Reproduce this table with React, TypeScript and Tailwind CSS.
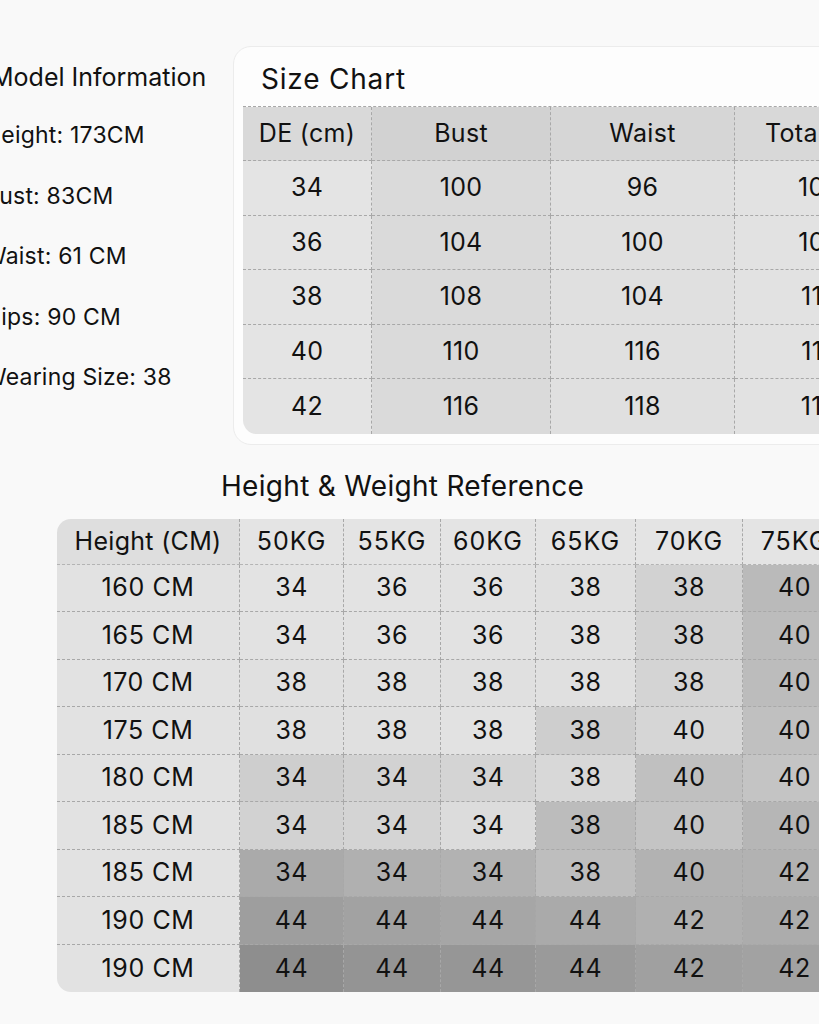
const modelInfo = ["Height: 173CM", "Bust: 83CM", "Waist: 61 CM", "Hips: 90 CM", "Wearing Size: 38"];

const sizeHead = ["DE (cm)", "Bust", "Waist", "Total Length"];
const sizeHeadBg = ["bg-[#d9d9d9]", "bg-[#d2d2d2]", "bg-[#d6d6d6]", "bg-[#d8d8d8]"];
const sizeBodyBg = ["bg-[#e4e4e4]", "bg-[#dadada]", "bg-[#e0e0e0]", "bg-[#e2e2e2]"];
const sizeRows = [
  ["34", "100", "96", "104"],
  ["36", "104", "100", "106"],
  ["38", "108", "104", "110"],
  ["40", "110", "116", "112"],
  ["42", "116", "118", "114"],
];

const weights = ["50KG", "55KG", "60KG", "65KG", "70KG", "75KG"];

const refRows: { h: string; v: string[]; bg: string[] }[] = [
  { h: "160 CM", v: ["34", "36", "36", "38", "38", "40"], bg: ["bg-[#e3e3e3]", "bg-[#e3e3e3]", "bg-[#e2e2e2]", "bg-[#e0e0e0]", "bg-[#d2d2d2]", "bg-[#bababa]"] },
  { h: "165 CM", v: ["34", "36", "36", "38", "38", "40"], bg: ["bg-[#e2e2e2]", "bg-[#e2e2e2]", "bg-[#e2e2e2]", "bg-[#e0e0e0]", "bg-[#d2d2d2]", "bg-[#bcbcbc]"] },
  { h: "170 CM", v: ["38", "38", "38", "38", "38", "40"], bg: ["bg-[#e0e0e0]", "bg-[#e0e0e0]", "bg-[#e0e0e0]", "bg-[#e0e0e0]", "bg-[#d4d4d4]", "bg-[#bcbcbc]"] },
  { h: "175 CM", v: ["38", "38", "38", "38", "40", "40"], bg: ["bg-[#e0e0e0]", "bg-[#e0e0e0]", "bg-[#e2e2e2]", "bg-[#cecece]", "bg-[#d6d6d6]", "bg-[#c0c0c0]"] },
  { h: "180 CM", v: ["34", "34", "34", "38", "40", "40"], bg: ["bg-[#cecece]", "bg-[#d2d2d2]", "bg-[#d4d4d4]", "bg-[#d8d8d8]", "bg-[#c0c0c0]", "bg-[#c4c4c4]"] },
  { h: "185 CM", v: ["34", "34", "34", "38", "40", "40"], bg: ["bg-[#d2d2d2]", "bg-[#d4d4d4]", "bg-[#dcdcdc]", "bg-[#bcbcbc]", "bg-[#c4c4c4]", "bg-[#b6b6b6]"] },
  { h: "185 CM", v: ["34", "34", "34", "38", "40", "42"], bg: ["bg-[#aaaaaa]", "bg-[#b0b0b0]", "bg-[#b2b2b2]", "bg-[#bebebe]", "bg-[#b2b2b2]", "bg-[#b2b2b2]"] },
  { h: "190 CM", v: ["44", "44", "44", "44", "42", "42"], bg: ["bg-[#9e9e9e]", "bg-[#a2a2a2]", "bg-[#a6a6a6]", "bg-[#aaaaaa]", "bg-[#b0b0b0]", "bg-[#acacac]"] },
  { h: "190 CM", v: ["44", "44", "44", "44", "42", "42"], bg: ["bg-[#8e8e8e]", "bg-[#949494]", "bg-[#969696]", "bg-[#9a9a9a]", "bg-[#a0a0a0]", "bg-[#a2a2a2]"] },
];

export default function App() {
  return (
    <div className="h-[1024px] w-[819px] overflow-hidden bg-[#f9f9f9] font-['Inter','Liberation_Sans',sans-serif] text-[#111]">
      <div className="flex pt-[46px]">
        <div className="w-[233px] shrink-0 pt-[16px]">
          <div className="ml-[-9px] h-[30px] text-[25px] leading-[30px] whitespace-nowrap">Model Information</div>
          <div className="mt-[28px] flex flex-col gap-[30.5px]">
            {modelInfo.map((t) => (
              <div key={t} className="ml-[-16px] h-[30px] text-[23px] leading-[30px] tracking-[0.2px] whitespace-nowrap">
                {t}
              </div>
            ))}
          </div>
        </div>

        <div className="w-[720px] shrink-0 rounded-[18px] border border-[#ececec] bg-[#fdfdfd] pb-[10px] pl-[9px] pt-[15px]">
          <div className="mb-[10px] pl-[18px] text-[28px] leading-[34px] tracking-[0.8px]">Size Chart</div>
          <div className="grid grid-cols-[129px_179px_184px_170px] overflow-hidden rounded-bl-[14px] border-t border-dashed border-[#a8a8a8]">
            {sizeHead.map((t, i) => (
              <div
                key={t}
                className={`flex h-[54px] items-center border-b border-r border-dashed border-[#a8a8a8] text-[25px] tracking-[0.3px] whitespace-nowrap ${
                  i === 3 ? "justify-start pl-[30px]" : "justify-center"
                } ${sizeHeadBg[i]}`}
              >
                {t}
              </div>
            ))}
            {sizeRows.map((row, r) =>
              row.map((v, i) => (
                <div
                  key={`${r}-${i}`}
                  className={`flex h-[54.6px] items-center justify-center border-r border-dashed border-[#a8a8a8] text-[25px] tracking-[0.3px] ${
                    r < sizeRows.length - 1 ? "border-b" : ""
                  } ${sizeBodyBg[i]}`}
                >
                  {v}
                </div>
              ))
            )}
          </div>
        </div>
      </div>

      <div className="mt-[24px] pl-[221px] text-[28px] leading-[34px] tracking-[0.3px] whitespace-nowrap">Height &amp; Weight Reference</div>

      <div className="ml-[57px] mt-[16px] grid w-[790px] grid-cols-[183px_104px_97px_95px_100px_107px_104px] overflow-hidden rounded-l-[14px]">
        <div className="flex h-[46px] items-center justify-center border-b border-r border-dashed border-b-[#b4b4b4] border-r-[#a8a8a8] bg-[#dedede] text-[25px] tracking-[0.3px] whitespace-nowrap">
          Height (CM)
        </div>
        {weights.map((w) => (
          <div
            key={w}
            className="flex h-[46px] items-center justify-center border-b border-r border-dashed border-b-[#b4b4b4] border-r-[#a8a8a8] bg-[#e4e4e4] text-[25px] tracking-[1px] whitespace-nowrap"
          >
            {w}
          </div>
        ))}
        {refRows.map((row, r) => (
          <div key={r} className="contents">
            <div
              className={`flex h-[47.5px] items-center justify-center border-r border-dashed border-[#a8a8a8] bg-[#e2e2e2] text-[25px] tracking-[0.6px] whitespace-nowrap ${
                r < refRows.length - 1 ? "border-b" : ""
              }`}
            >
              {row.h}
            </div>
            {row.v.map((v, i) => (
              <div
                key={i}
                className={`flex h-[47.5px] items-center justify-center border-r border-dashed border-[#a8a8a8] text-[25px] tracking-[0.5px] ${
                  r < refRows.length - 1 ? "border-b" : ""
                } ${row.bg[i]}`}
              >
                {v}
              </div>
            ))}
          </div>
        ))}
      </div>
    </div>
  );
}
